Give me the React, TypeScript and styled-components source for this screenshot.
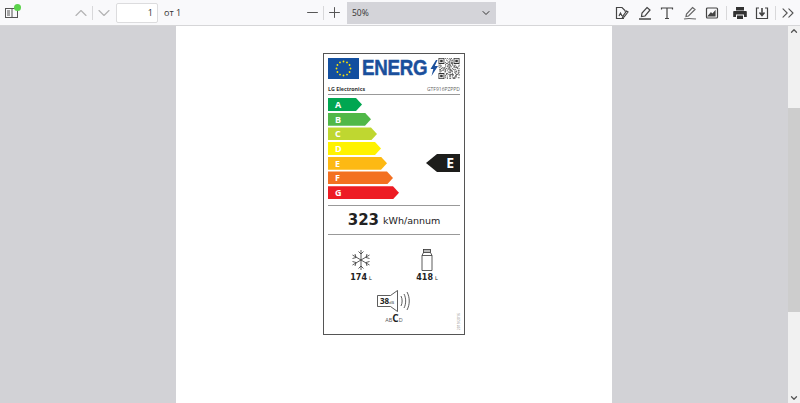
import styled, { createGlobalStyle } from "styled-components";
import { ChevronUp, ChevronDown, ChevronsRight, Minus, Plus } from "lucide-react";

const Global = createGlobalStyle`
    html, body { margin: 0; padding: 0; height: 100%; overflow: hidden; }
    body { font-family: "Open Sans", "Liberation Sans", sans-serif; }
    svg { display: block; }
`

const Page = styled.div`
    width: 800px;
    height: 403px;
    display: flex;
    flex-direction: column;
    background: #d2d2d6;
`

const Toolbar = styled.div`
    height: 25px;
    flex: none;
    display: flex;
    align-items: center;
    background: #f9f9fb;
    border-bottom: 1px solid #d6d6d8;
    color: #4a4a4a;
`

const SideButton = styled.div`
    position: relative;
    width: 14px;
    height: 10px;
    margin-left: 5px;
    margin-right: 52px;
`

const Dot = styled.span`
    position: absolute;
    top: -4px;
    left: 9px;
    width: 7px;
    height: 7px;
    border-radius: 50%;
    background: #5bd34b;
`

const Sep = styled.div<{ $l?: number; $r?: number }>`
    width: 1px;
    height: 14px;
    flex: none;
    background: #d8d8da;
    margin-left: ${(p) => p.$l ?? 0}px;
    margin-right: ${(p) => p.$r ?? 0}px;
`

const PageInput = styled.div`
    width: 42px;
    height: 20px;
    box-sizing: border-box;
    margin-left: 2px;
    padding-right: 4px;
    background: #fff;
    border: 1px solid #dcdcde;
    border-radius: 2px;
    font-size: 9px;
    line-height: 18px;
    text-align: right;
    color: #333;
`

const PageTotal = styled.span`
    margin-left: 6px;
    width: 140px;
    flex: none;
    font-size: 9px;
    color: #333;
`

const ZoomSelect = styled.div`
    width: 149px;
    height: 22px;
    flex: none;
    box-sizing: border-box;
    margin-left: 4px;
    margin-right: 119px;
    padding: 0 4px 0 5px;
    display: flex;
    align-items: center;
    justify-content: space-between;
    background: #d4d4d9;
    font-size: 8.5px;
    color: #333;
`

const Tool = styled.svg<{ $gap?: number }>`
    width: 14px;
    height: 14px;
    flex: none;
    margin-right: ${(p) => p.$gap ?? 8.5}px;
    fill: none;
    stroke: #444;
    stroke-width: 1.2;
`

const Body = styled.div`
    flex: 1;
    min-height: 0;
    display: flex;
    justify-content: space-between;
`

const Sheet = styled.div`
    width: 436px;
    margin-left: 176px;
    background: #fff;
    display: flex;
    justify-content: center;
    padding-top: 27px;
`

const Label = styled.div`
    position: relative;
    width: 142px;
    height: 282px;
    box-sizing: border-box;
    border: 1px solid #555;
    padding: 3px 4px 0;
    display: flex;
    flex-direction: column;
    background: #fff;
`

const LabelHead = styled.div`
    display: flex;
    align-items: center;
    height: 22px;
`

const Energy = styled.span`
    margin-left: 3px;
    width: 66px;
    flex: none;
    font-family: "Liberation Sans", sans-serif;
    font-weight: 700;
    font-size: 22px;
    line-height: 22px;
    color: #1a4f9c;
    letter-spacing: -0.3px;
    -webkit-text-stroke: 0.5px #1a4f9c;
    transform: scaleX(0.85);
    transform-origin: left;
`

const Brand = styled.div`
    margin-top: 6px;
    height: 7px;
    display: flex;
    align-items: center;
    justify-content: space-between;
    border-bottom: 1px solid #999;
    padding-bottom: 2px;
    font-size: 5.3px;
    font-weight: 700;
    color: #333;
`

const Model = styled.span`
    font-size: 5px;
    font-weight: 400;
    color: #666;
`

const Rating = styled.div`
    position: relative;
    height: 104px;
    margin-top: 3px;
    display: flex;
    flex-direction: column;
    gap: 1.7px;
`

const Bar = styled.div<{ $w: number; $c: string }>`
    width: ${(p) => p.$w}px;
    height: 13px;
    flex: none;
    box-sizing: border-box;
    padding-left: 7px;
    font-size: 9px;
    font-weight: 700;
    line-height: 13px;
    color: #fff;
    background: ${(p) => p.$c};
    clip-path: polygon(0 0, calc(100% - 6px) 0, 100% 50%, calc(100% - 6px) 100%, 0 100%);
`

const Marker = styled.div`
    position: absolute;
    right: 0;
    top: 56px;
    width: 34px;
    height: 18px;
    box-sizing: border-box;
    padding-right: 6px;
    background: #1d1d1b;
    color: #fff;
    font-size: 14px;
    font-weight: 700;
    line-height: 18px;
    text-align: right;
    clip-path: polygon(0 50%, 11px 0, 100% 0, 100% 100%, 11px 100%);
`

const Consumption = styled.div`
    margin-top: 3px;
    height: 28px;
    border-top: 1px solid #999;
    border-bottom: 1px solid #999;
    display: flex;
    align-items: center;
    justify-content: center;
    gap: 4px;
    color: #222;
`

const Kwh = styled.b`
    font-family: "DejaVu Sans", sans-serif;
    font-size: 15px;
`

const KwhUnit = styled.span`
    font-family: "DejaVu Sans", sans-serif;
    font-size: 9.5px;
`

const Specs = styled.div`
    margin-top: 14px;
    display: grid;
    grid-template-columns: 66px 66px;
    justify-items: center;
`

const Spec = styled.div`
    display: flex;
    flex-direction: column;
    align-items: center;
    height: 34px;
    justify-content: space-between;
`

const SpecValue = styled.div`
    font-family: "DejaVu Sans", sans-serif;
    font-weight: 700;
    font-size: 8px;
    line-height: 9px;
    color: #222;
`

const SpecUnit = styled.span`
    font-weight: 400;
    font-size: 5px;
    margin-left: 2px;
`

const Noise = styled.div`
    margin-top: 7px;
    display: flex;
    flex-direction: column;
    align-items: center;
`

const NoiseClass = styled.div`
    margin-top: 2px;
    font-size: 5.5px;
    line-height: 9px;
    color: #555;
    b { font-size: 10px; color: #222; }
`

const Code = styled.span`
    position: absolute;
    right: 3px;
    bottom: 4px;
    writing-mode: vertical-rl;
    transform: rotate(180deg);
    font-size: 3.5px;
    color: #888;
`

const Scrollbar = styled.div`
    width: 12px;
    flex: none;
    display: flex;
    flex-direction: column;
    align-items: center;
    background: #f1f1f1;
    color: #555;
`

const Track = styled.div`
    flex: 1;
    width: 100%;
    padding-top: 72px;
    padding-bottom: 81px;
    box-sizing: border-box;
    display: flex;
`

const Thumb = styled.div`
    flex: 1;
    background: #cdcdcd;
`

const bars = [
    { l: "A", w: 34, c: "#00a651" },
    { l: "B", w: 43, c: "#50b848" },
    { l: "C", w: 49, c: "#bfd730" },
    { l: "D", w: 53, c: "#fff200" },
    { l: "E", w: 59, c: "#fdb913" },
    { l: "F", w: 65, c: "#f37021" },
    { l: "G", w: 71, c: "#ed1c24" },
]

// not a real code, just the look of one
const QR_SIZE = 25
const inFinder = (x: number, y: number) =>
    (x < 8 && y < 8) || (x > 16 && y < 8) || (x < 8 && y > 16)
const qrOn = (x: number, y: number) => ((x * 7 + y * 13 + x * y * 3) ^ (x * y + y)) % 5 < 2

function EuFlag() {
    const stars = Array.from({ length: 12 }, (_, i) => {
        const a = (i * Math.PI) / 6
        return <circle key={i} cx={15.5 + 7 * Math.cos(a)} cy={10.5 + 7 * Math.sin(a)} r="0.9" fill="#ffe600" />
    })
    return (
        <svg width="31" height="21" viewBox="0 0 31 21" style={{ flex: "none" }}>
            <rect width="31" height="21" fill="#134f9f" />
            {stars}
        </svg>
    )
}

function Bolt() {
    return (
        <svg width="8" height="16" viewBox="0 0 8 16" style={{ flex: "none", marginLeft: 2 }}>
            <path d="M6 0 .5 9h2.800L1.500 16 8 6H4.800L7.500 0z" fill="#1a4f9c" />
        </svg>
    )
}

function Qr() {
    const cells = []
    for (let y = 0; y < QR_SIZE; y++) {
        for (let x = 0; x < QR_SIZE; x++) {
            if (!inFinder(x, y) && qrOn(x, y)) {
                cells.push(<rect key={x + "-" + y} x={x} y={y} width="1" height="1" fill="#333" />)
            }
        }
    }
    return (
        <svg width="22" height="21" viewBox="0 0 25 25" style={{ flex: "none", marginLeft: "auto" }}>
            {cells}
            <path
                d="M0 0h7v7H0zM1 1v5h5V1zM18 0h7v7h-7zM19 1v5h5V1zM0 18h7v7H0zM1 19v5h5v-5zM2 2h3v3H2zM20 2h3v3h-3zM2 20h3v3H2z"
                fill="#333"
                fillRule="evenodd"
            />
        </svg>
    )
}

function Snowflake() {
    return (
        <svg width="20" height="22" viewBox="0 0 20 22" fill="none" stroke="#333" strokeWidth="0.8">
            <path d="M10 1v20M1.500 6l17 10M18.500 6l-17 10" />
            <path d="M7.500 2.500 10 5l2.500-2.500M7.500 19.500 10 17l2.500 2.500M1.500 9.500 5 8.500 4 5M18.500 9.500 15 8.500 16 5M1.500 12.500 5 13.500 4 17M18.500 12.500 15 13.500 16 17" />
        </svg>
    )
}

function Bottle() {
    return (
        <svg width="12" height="22" viewBox="0 0 12 22" fill="none" stroke="#333" strokeWidth="0.8">
            <rect x="2.500" y="0.500" width="7" height="3" fill="#bbb" />
            <path d="M2.500 3.500 1 6.500v15h10v-15l-1.500-3" />
            <path d="M1 6.500h10" />
        </svg>
    )
}

function Speaker() {
    return (
        <svg width="34" height="22" viewBox="0 0 34 22" fill="none" stroke="#333" strokeWidth="0.8">
            <path d="M0.500 5.500h13L20.500 .5v21l-7-5h-13z" fill="#fff" />
            <path d="M24 6c1.500 3 1.500 7 0 10M27 4c2.200 4 2.200 10 0 14M30 2c3 5.500 3 12.500 0 18" />
            <text x="3" y="14" fontSize="8" fontWeight="700" fontFamily="Open Sans" fill="#222" stroke="none">38</text>
            <text x="12" y="14" fontSize="4" fontFamily="Open Sans" fill="#444" stroke="none">dB</text>
        </svg>
    )
}

export default function App() {
    return (
        <Page>
            <Global />
            <Toolbar>
                <SideButton>
                    <svg width="14" height="10" viewBox="0 0 14 10" fill="none" stroke="#555" strokeWidth="1">
                        <rect x="0.500" y="0.500" width="12" height="9" />
                        <path d="M7 .5v9M2 3h3M2 5h3M2 7h3" />
                    </svg>
                    <Dot />
                </SideButton>
                <ChevronUp size={20} color="#b4b4b4" strokeWidth={1.4} />
                <Sep $l={1} $r={1} />
                <ChevronDown size={20} color="#b4b4b4" strokeWidth={1.4} />
                <PageInput>1</PageInput>
                <PageTotal>от 1</PageTotal>
                <Minus size={17} color="#555" strokeWidth={1.4} />
                <Sep $l={2} $r={2} />
                <Plus size={17} color="#555" strokeWidth={1.4} />
                <ZoomSelect>
                    50%
                    <ChevronDown size={12} color="#333" />
                </ZoomSelect>
                <Tool viewBox="0 0 14 14">
                    <path d="M9 12.500H1.500v-11H7l3 3v1M4 10l1.500-3 1.500 3M11.500 5 8 10l-.5 1.500L9 11l4-5z" />
                </Tool>
                <Tool viewBox="0 0 14 14">
                    <path d="M9 1.500 12 4l-5 6-3.500 .5L4 7z" />
                    <path d="M1 13h12" strokeWidth="1.500" />
                </Tool>
                <Tool viewBox="0 0 14 14">
                    <path d="M1.500 3.500V2h11v1.500M7 2v10.500M5 12.500h4" />
                </Tool>
                <Tool viewBox="0 0 14 14" style={{ stroke: "#666" }}>
                    <path d="M9.500 1.500 12 3.500 5.500 10 3 10.500 3.500 8zM1 13c3-.8 8-.5 12 0" />
                </Tool>
                <Tool viewBox="0 0 14 14" $gap={7}>
                    <rect x="1.500" y="2" width="11" height="10" rx="1" />
                    <path d="M3.500 10 6 7l1.500 1.500L10 5.500V10z" fill="#444" />
                </Tool>
                <Sep $r={6} />
                <Tool viewBox="0 0 14 14" $gap={8} style={{ stroke: "none" }}>
                    <path d="M3 1h8v3.500H3zM1 5h12a.8.8 0 0 1 .8.8V11H11V8.500H3V11H.2V5.800A.8.8 0 0 1 1 5zM4 9.500h6V13H4z" fill="#333" />
                </Tool>
                <Tool viewBox="0 0 14 14" $gap={6}>
                    <path d="M4 2H1.500v10.500h11V2H10" />
                    <path d="M7 2v6.500M4.500 6.500 7 9.500l2.500-3" strokeWidth="1.600" />
                </Tool>
                <Sep $r={2} />
                <ChevronsRight size={20} color="#555" strokeWidth={1.3} />
            </Toolbar>
            <Body>
                <Sheet>
                    <Label>
                        <LabelHead>
                            <EuFlag />
                            <Energy>ENERG</Energy>
                            <Bolt />
                            <Qr />
                        </LabelHead>
                        <Brand>
                            <span>LG Electronics</span>
                            <Model>GTF916PZPPD</Model>
                        </Brand>
                        <Rating>
                            {bars.map((b) => (
                                <Bar key={b.l} $w={b.w} $c={b.c}>{b.l}</Bar>
                            ))}
                            <Marker>E</Marker>
                        </Rating>
                        <Consumption>
                            <Kwh>323</Kwh>
                            <KwhUnit>kWh/annum</KwhUnit>
                        </Consumption>
                        <Specs>
                            <Spec>
                                <Snowflake />
                                <SpecValue>174<SpecUnit>L</SpecUnit></SpecValue>
                            </Spec>
                            <Spec>
                                <Bottle />
                                <SpecValue>418<SpecUnit>L</SpecUnit></SpecValue>
                            </Spec>
                        </Specs>
                        <Noise>
                            <Speaker />
                            <NoiseClass>AB<b>C</b>D</NoiseClass>
                        </Noise>
                        <Code>2019/2016</Code>
                    </Label>
                </Sheet>
                <Scrollbar>
                    <ChevronUp size={10} strokeWidth={3} />
                    <Track><Thumb /></Track>
                    <ChevronDown size={10} strokeWidth={3} />
                </Scrollbar>
            </Body>
        </Page>
    )
}
